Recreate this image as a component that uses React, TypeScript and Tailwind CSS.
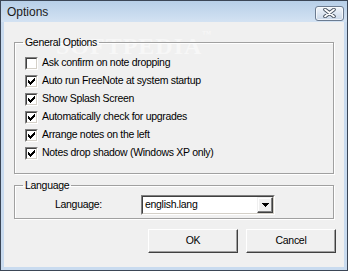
import React from "react";

const font = { fontFamily: '"Liberation Sans", Arial, sans-serif' };
const txt = "text-[10.5px] tracking-[-0.3px] text-black";

function Check() {
  // classic 7x7 pixel tick
  const cols = [2, 3, 4, 3, 2, 1, 0];
  return (
    <svg width="7" height="7" viewBox="0 0 7 7" shapeRendering="crispEdges" className="block">
      {cols.map((top, x) => (
        <rect key={x} x={x} y={top} width="1" height="3" fill="#000" />
      ))}
    </svg>
  );
}

function CheckBox({ checked }: { checked: boolean }) {
  return (
    <span className="block h-[13px] w-[13px] shrink-0 border border-t-[#808080] border-l-[#808080] border-b-white border-r-white">
      <span className="flex h-full w-full items-center justify-center border border-t-[#404040] border-l-[#404040] border-b-[#d4d0c8] border-r-[#d4d0c8] bg-white">
        {checked && <Check />}
      </span>
    </span>
  );
}

function GroupBox({ title, className, children }: { title: string; className?: string; children: React.ReactNode }) {
  return (
    <fieldset
      className={
        "relative border border-[#a0a0a0] shadow-[inset_1px_1px_0_#fff,1px_1px_0_#fff] " + (className ?? "")
      }
    >
      <legend className={"ml-[8px] px-[2px] leading-[13px] " + txt}>{title}</legend>
      {children}
    </fieldset>
  );
}

function Button({ label }: { label: string }) {
  return (
    <button className={"flex h-[24px] w-[90px] items-center justify-center border border-t-white border-l-white border-b-[#404040] border-r-[#404040] bg-[#f0f0f0] shadow-[inset_-1px_-1px_0_#a0a0a0] " + txt}>
      {label}
    </button>
  );
}

const options = [
  { label: "Ask confirm on note dropping", checked: false },
  { label: "Auto run FreeNote at system startup", checked: true },
  { label: "Show Splash Screen", checked: true },
  { label: "Automatically check for upgrades", checked: true },
  { label: "Arrange notes on the left", checked: true },
  { label: "Notes drop shadow (Windows XP only)", checked: true },
];

export default function App() {
  return (
    <div className="h-[271px] w-[348px] overflow-hidden border border-[#3b4656] bg-[#c9dbef]" style={font}>
      {/* title bar */}
      <div className="flex h-[21px] items-center justify-between bg-gradient-to-b from-[#b7cfe8] to-[#d3e2f2] pl-[6px] pr-[3px]">
        <span className="text-[12px] text-[#1b1b1b]">Options</span>
        <span className="mt-[3px] flex h-[15px] w-[29px] items-center justify-center rounded-[3px] border border-[#6b7b90] bg-gradient-to-b from-[#f2f6fb] to-[#c9d7e8] shadow-[inset_0_0_0_1px_#ffffffaa]">
          <svg width="13" height="10" viewBox="0 0 13 10">
            <path d="M2 1.5 L11 8.5 M11 1.5 L2 8.5" stroke="#45505e" strokeWidth="3.6" strokeLinecap="round" />
            <path d="M2 1.5 L11 8.5 M11 1.5 L2 8.5" stroke="#ffffff" strokeWidth="1.8" strokeLinecap="round" />
          </svg>
        </span>
      </div>

      {/* client area */}
      <div className="relative mx-[3px] h-[245px] bg-[#f0f0f0] px-[10px] pt-[14px]">
        {/* faint watermark */}
        <div className="pointer-events-none absolute left-[52px] top-[6px] select-none text-[24px] font-bold tracking-[1px] text-[#f7f7f7]" style={{ fontFamily: '"Liberation Serif", serif' }}>
          SOFTPEDIA<span className="align-top text-[9px]">™</span>
        </div>

        <GroupBox title="General Options" className="h-[138px] w-[320px]">
          <div className="flex flex-col pl-[10px] pt-[5px]">
            {options.map((o) => (
              <div key={o.label} className="flex h-[18px] items-center gap-[4px]">
                <CheckBox checked={o.checked} />
                <span className={txt}>{o.label}</span>
              </div>
            ))}
          </div>
        </GroupBox>

        <GroupBox title="Language" className="mt-[5px] h-[40px] w-[320px]">
          <div className="flex items-center pt-[3px]">
            <span className={"w-[126px] pl-[40px] " + txt}>Language:</span>
            <div className="flex h-[20px] w-[134px] items-center border border-t-[#808080] border-l-[#808080] border-b-white border-r-white">
              <div className="flex h-full w-full items-center justify-between border border-t-[#404040] border-l-[#404040] border-b-[#d4d0c8] border-r-[#d4d0c8] bg-white pl-[2px]">
                <span className={txt}>english.lang</span>
                <span className="flex h-[16px] w-[16px] items-center justify-center border border-t-[#f0f0f0] border-l-[#f0f0f0] border-b-[#404040] border-r-[#404040] bg-[#f0f0f0] shadow-[inset_-1px_-1px_0_#808080,inset_1px_1px_0_#fff]">
                  <svg width="7" height="4" viewBox="0 0 7 4" shapeRendering="crispEdges">
                    <path d="M0 0 H7 V1 H6 V2 H5 V3 H4 V4 H3 V3 H2 V2 H1 V1 H0 Z" fill="#000" />
                  </svg>
                </span>
              </div>
            </div>
          </div>
        </GroupBox>

        <div className="-mr-[2px] mt-[10px] flex justify-end gap-[8px]">
          <Button label="OK" />
          <Button label="Cancel" />
        </div>
      </div>
    </div>
  );
}
